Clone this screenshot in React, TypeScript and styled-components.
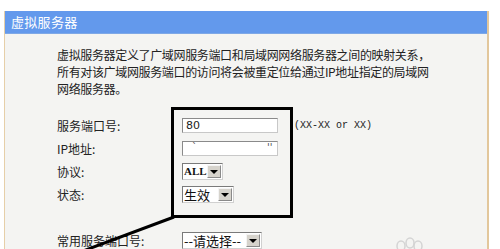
import React from "react";
import styled, { createGlobalStyle } from "styled-components";

const Global = createGlobalStyle`
  html, body { margin: 0; padding: 0; background: #ffffff; }
  body { width: 500px; height: 249px; overflow: hidden; font-family: "Noto Sans CJK SC", "Noto Sans", sans-serif; }
`;

const Page = styled.div`
  position: relative;
  width: 500px;
  height: 249px;
  padding: 11px 0 0 4px;
  box-sizing: border-box;
  overflow: hidden;
`;

const Panel = styled.div`
  width: 485px;
  height: 260px;
  background: #f4f4f2;
  border-left: 1px solid #e6cfa8;
  border-right: 2px solid #e2c79c;
  box-sizing: border-box;
`;

const Header = styled.div`
  height: 22px;
  background: #6399ec;
  border-bottom: 1px solid #7ea8e6;
  color: #ffffff;
  font-size: 13px;
  line-height: 22px;
  padding-left: 6px;
  letter-spacing: 0.3px;
`;

const Body = styled.div`
  padding: 12px 0 0 52px;
`;

const Desc = styled.p`
  margin: 0;
  font-size: 12px;
  line-height: 17px;
  color: #222;
  letter-spacing: -0.35px;
  width: 380px;
`;

const Form = styled.div`
  display: grid;
  grid-template-columns: 125px auto;
  grid-auto-rows: 23px;
  align-items: center;
  margin-top: 17px;
`;

const Label = styled.div`
  font-size: 12px;
  color: #222;
`;

const Cell = styled.div`
  display: flex;
  align-items: center;
  gap: 16px;
`;

const TextBox = styled.div`
  width: 96px;
  height: 15px;
  box-sizing: border-box;
  border: 1px solid #8a8a8a;
  border-right-color: #c8c8c8;
  border-bottom-color: #c8c8c8;
  background: #ffffff;
  font-family: "DejaVu Sans", sans-serif;
  font-size: 11px;
  line-height: 13px;
  padding-left: 3px;
  color: #222;
  position: relative;
`;

const Faint = styled.span<{ $left: number }>`
  position: absolute;
  left: ${(p) => p.$left}px;
  top: -1px;
  color: #555;
  font-size: 10px;
`;

const Hint = styled.span`
  font-family: "Liberation Mono", monospace;
  font-size: 10px;
  color: #222;
`;

const Select = styled.div<{ $w: number; $h: number }>`
  width: ${(p) => p.$w}px;
  height: ${(p) => p.$h}px;
  box-sizing: border-box;
  border: 1px solid #7a7a7a;
  border-right-color: #d0d0d0;
  border-bottom-color: #d0d0d0;
  background: #ffffff;
  display: flex;
  align-items: center;
  justify-content: space-between;
  padding: 0 1px;
`;

const SelText = styled.span<{ $serif?: boolean }>`
  font-family: ${(p) => (p.$serif ? '"Liberation Serif", serif' : '"Noto Sans CJK SC", sans-serif')};
  font-size: ${(p) => (p.$serif ? "11px" : "13px")};
  font-weight: ${(p) => (p.$serif ? 700 : 400)};
  color: #111;
  line-height: 1;
  white-space: nowrap;
`;

const Arrow = styled.div`
  width: 14px;
  height: 13px;
  background: #d6d3cc;
  border: 1px solid #f4f4f4;
  border-right-color: #8a8a8a;
  border-bottom-color: #8a8a8a;
  box-sizing: border-box;
  display: flex;
  align-items: center;
  justify-content: center;
  &::after {
    content: "";
    border-left: 4px solid transparent;
    border-right: 4px solid transparent;
    border-top: 4px solid #000;
  }
`;

const Spacer = styled.div`
  grid-column: 1 / span 2;
  height: 21px;
`;

const Annotation = styled.div`
  position: absolute;
  left: 171px;
  top: 107px;
  width: 122px;
  height: 111px;
  border: 3px solid #000;
  box-sizing: border-box;
`;

const Overlay = styled.svg`
  position: absolute;
  left: 0;
  top: 0;
  pointer-events: none;
`;

export default function App() {
  return (
    <>
      <Global />
      <Page>
        <Panel>
          <Header>虚拟服务器</Header>
          <Body>
            <Desc>
              虚拟服务器定义了广域网服务端口和局域网网络服务器之间的映射关系，所有对该广域网服务端口的访问将会被重定位给通过IP地址指定的局域网网络服务器。
            </Desc>
            <Form>
              <Label>服务端口号:</Label>
              <Cell>
                <TextBox>80</TextBox>
                <Hint>(XX-XX or XX)</Hint>
              </Cell>
              <Label>IP地址:</Label>
              <Cell>
                <TextBox>
                  <Faint $left={9}>ˋ</Faint>
                  <Faint $left={84}>''</Faint>
                </TextBox>
              </Cell>
              <Label>协议:</Label>
              <Cell>
                <Select $w={41} $h={17}>
                  <SelText $serif>ALL</SelText>
                  <Arrow />
                </Select>
              </Cell>
              <Label>状态:</Label>
              <Cell>
                <Select $w={52} $h={17}>
                  <SelText>生效</SelText>
                  <Arrow />
                </Select>
              </Cell>
              <Spacer />
              <Label>常用服务端口号:</Label>
              <Cell>
                <Select $w={80} $h={17}>
                  <SelText>--请选择--</SelText>
                  <Arrow />
                </Select>
              </Cell>
            </Form>
          </Body>
        </Panel>
        <Annotation />
        <Overlay width="500" height="249" viewBox="0 0 500 249">
          <line x1="174" y1="217" x2="83" y2="251" stroke="#000" strokeWidth="3" />
          <g fill="none" stroke="#d4d4d4" strokeWidth="1.5">
            <ellipse cx="401" cy="246" rx="4" ry="5" />
            <ellipse cx="410" cy="243" rx="4" ry="5" />
            <ellipse cx="418" cy="246" rx="4" ry="5" />
          </g>
        </Overlay>
      </Page>
    </>
  );
}
